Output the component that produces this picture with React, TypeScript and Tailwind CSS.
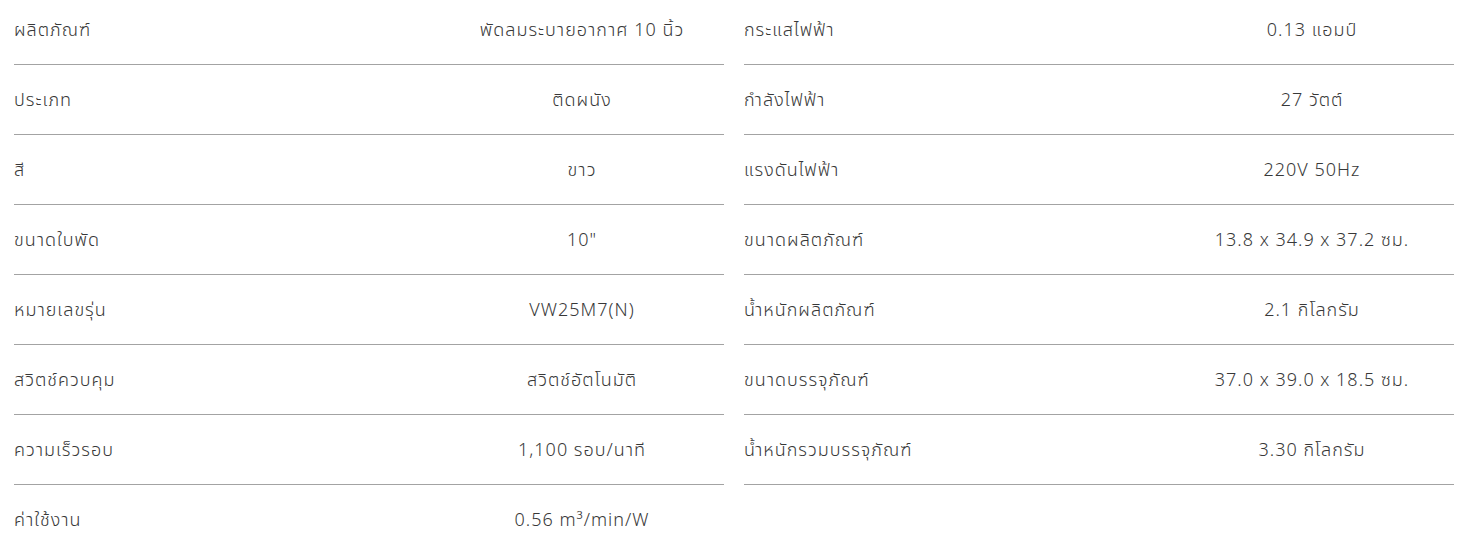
const left: [string, string][] = [
  ['ผลิตภัณฑ์', 'พัดลมระบายอากาศ 10 นิ้ว'],
  ['ประเภท', 'ติดผนัง'],
  ['สี', 'ขาว'],
  ['ขนาดใบพัด', '10"'],
  ['หมายเลขรุ่น', 'VW25M7(N)'],
  ['สวิตช์ควบคุม', 'สวิตช์อัตโนมัติ'],
  ['ความเร็วรอบ', '1,100 รอบ/นาที'],
  ['ค่าใช้งาน', '0.56 m³/min/W'],
];

const right: [string, string][] = [
  ['กระแสไฟฟ้า', '0.13 แอมป์'],
  ['กำลังไฟฟ้า', '27 วัตต์'],
  ['แรงดันไฟฟ้า', '220V 50Hz'],
  ['ขนาดผลิตภัณฑ์', '13.8 x 34.9 x 37.2 ซม.'],
  ['น้ำหนักผลิตภัณฑ์', '2.1 กิโลกรัม'],
  ['ขนาดบรรจุภัณฑ์', '37.0 x 39.0 x 18.5 ซม.'],
  ['น้ำหนักรวมบรรจุภัณฑ์', '3.30 กิโลกรัม'],
];

function SpecColumn({ rows }: { rows: [string, string][] }) {
  return (
    <div className="flex flex-col">
      {rows.map(([label, value]) => (
        <div key={label} className="flex h-[70px] items-center border-b border-[#a3a3a3]">
          <div className="w-[60%]">{label}</div>
          <div className="w-[40%] text-center">{value}</div>
        </div>
      ))}
    </div>
  );
}

export default function App() {
  return (
    <div
      className="min-h-screen bg-white pl-[14px] pr-[28px] text-[18px] font-light tracking-[1px] text-[#383838]"
      style={{ fontFamily: '"Noto Sans", "Noto Sans Thai", sans-serif' }}
    >
      <div className="-mt-[5px] grid grid-cols-2 gap-x-[20px]">
        <SpecColumn rows={left} />
        <SpecColumn rows={right} />
      </div>
    </div>
  );
}
